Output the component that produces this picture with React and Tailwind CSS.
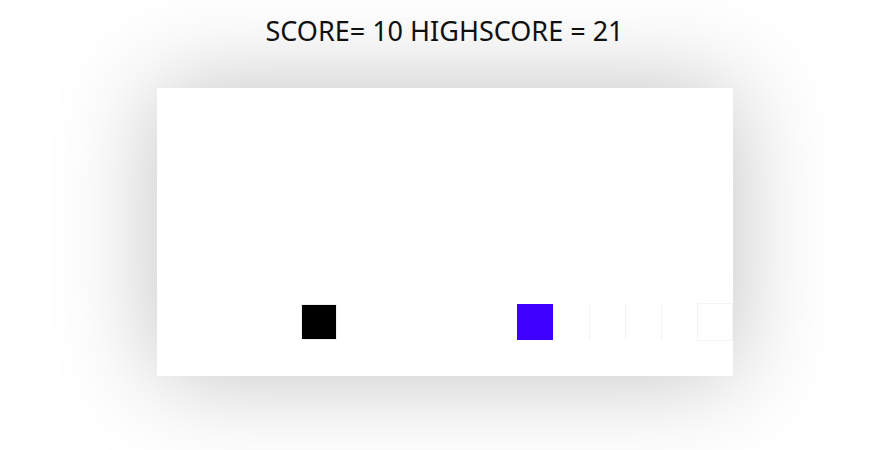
export default function App() {
  return (
    <div className="w-[878px] h-[450px] bg-white flex flex-col items-center overflow-hidden" style={{ fontFamily: '"Noto Sans", sans-serif' }}>
      <div className="mt-[12px] ml-[11px] text-[27px] leading-[38px] text-[#111]">SCORE= 10 HIGHSCORE = 21</div>
      <div className="mt-[38px] ml-[12px] relative w-[576px] h-[288px] bg-white shadow-[0_0_100px_rgba(0,0,0,0.25)]">
        <div className="absolute left-[144px] top-[216px] w-[36px] h-[36px] bg-black border border-[#eee]" />
        <div className="absolute left-[360px] top-[216px] w-[36px] h-[36px] bg-[#4000ff]" />
        <div className="absolute left-[432px] top-[216px] w-px h-[36px] bg-[#f4f4f8]" />
        <div className="absolute left-[468px] top-[216px] w-px h-[36px] bg-[#f4f4f8]" />
        <div className="absolute left-[504px] top-[216px] w-px h-[36px] bg-[#f4f4f8]" />
        <div className="absolute left-[540px] top-[215px] w-[36px] h-[38px] border border-[#f4f4f8]" />
      </div>
    </div>
  );
}
